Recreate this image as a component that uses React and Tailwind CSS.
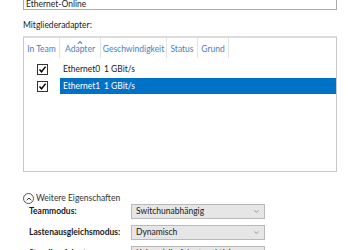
import { ChevronDown, ChevronUp } from "lucide-react";

const columns = [
  { label: "In Team", w: "w-[36px]" },
  { label: "Adapter", w: "w-[41px]", sorted: true },
  { label: "Geschwindigkeit", w: "w-[66px]" },
  { label: "Status", w: "w-[31px]" },
  { label: "Grund", w: "w-[31px]" },
];

const adapters = [
  { name: "Ethernet0", speed: "1 GBit/s", selected: false },
  { name: "Ethernet1", speed: "1 GBit/s", selected: true },
];

const props = [
  { label: "Teammodus:", value: "Switchunabhängig" },
  { label: "Lastenausgleichsmodus:", value: "Dynamisch" },
  { label: "Standby-Adapter:", value: "Keiner (alle Adapter aktiv)" },
];

const Check = () => (
  <div className="w-[11px] h-[11px] border border-[#333] bg-white flex items-center justify-center">
    <svg width="9" height="9" viewBox="0 0 9 9">
      <path d="M1.5 4.5 L3.5 6.8 L7.6 1.6" fill="none" stroke="#000" strokeWidth="1.4" />
    </svg>
  </div>
);

const App = () => {
  return (
    <div
      className="w-[350px] h-[250px] overflow-hidden bg-white text-[8.5px] text-[#1a1a1a] leading-none"
      style={{ fontFamily: 'Lato, "Noto Sans", sans-serif' }}
    >
      <div className="pl-[23px] w-[337px]">
        {/* TEAM NAME */}
        <div className="h-[10px] border-x border-b border-[#acacac] flex items-end pl-[2px]">
          <span className="leading-[9px]">Ethernet-Online</span>
        </div>

        {/* MEMBER ADAPTERS */}
        <p className="mt-[11px] h-[15px]">Mitgliederadapter:</p>

        <div className="h-[136px] border border-[#c8c8c8] border-t-[2px] border-t-[#dcdcdc]">
          {/* HEADER */}
          <div className="flex h-[20px] text-[#4482c8]">
            {columns.map((c) => (
              <div
                key={c.label}
                className={`relative ${c.w} shrink-0 border-r border-[#e3e3e3] flex items-center justify-center`}
              >
                {c.sorted && (
                  <ChevronUp
                    size={7}
                    strokeWidth={4}
                    className="absolute top-[1px] left-1/2 -translate-x-1/2 text-[#4482c8]"
                  />
                )}
                <span className="pt-[2px]">{c.label}</span>
              </div>
            ))}
          </div>

          {/* ROWS */}
          <div className="mt-[3px] flex flex-col gap-[1px]">
            {adapters.map((a) => (
              <div key={a.name} className="flex h-[16px] items-center">
                <div className="w-[36px] shrink-0 flex justify-center">
                  <Check />
                </div>
                <div
                  className={`flex-1 h-full flex items-center ${
                    a.selected ? "bg-[#0072c6] text-white" : ""
                  }`}
                >
                  <span className="w-[44px] shrink-0 pl-[3px]">{a.name}</span>
                  <span>{a.speed}</span>
                </div>
              </div>
            ))}
          </div>
        </div>

        {/* MORE PROPERTIES */}
        <div className="mt-[21px] flex items-center gap-[2px] h-[11px]">
          <div className="w-[11px] h-[11px] rounded-full border border-[#555] flex items-center justify-center">
            <ChevronUp size={8} strokeWidth={3} className="text-[#333]" />
          </div>
          <span className="text-[#333]">Weitere Eigenschaften</span>
        </div>

        <div className="flex flex-col gap-[6px] pl-[6px]">
          {props.map((p) => (
            <div key={p.label} className="flex items-center h-[15px]">
              <span className="w-[102px] shrink-0 font-bold">{p.label}</span>
              <div className="w-[134px] h-[15px] border border-[#b9b9b9] bg-[#e6e6e6] flex items-center justify-between px-[4px]">
                <span>{p.value}</span>
                <ChevronDown size={7} strokeWidth={3} className="text-[#888]" />
              </div>
            </div>
          ))}
        </div>
      </div>
    </div>
  );
};

export default App;
